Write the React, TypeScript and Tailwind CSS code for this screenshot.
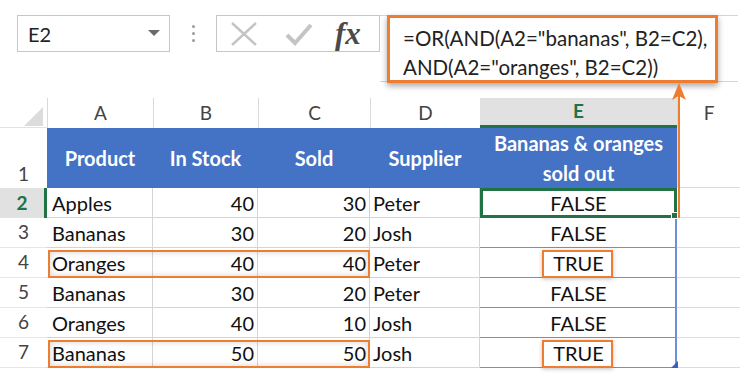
import React from "react";

const rows = [
    ["Apples", "40", "30", "Peter", "FALSE"],
    ["Bananas", "30", "20", "Josh", "FALSE"],
    ["Oranges", "40", "40", "Peter", "TRUE"],
    ["Bananas", "30", "20", "Peter", "FALSE"],
    ["Oranges", "40", "10", "Josh", "FALSE"],
    ["Bananas", "50", "50", "Josh", "TRUE"],
];

const letters = ["A", "B", "C", "D", "E", "F"];
const headers = ["Product", "In Stock", "Sold", "Supplier"];

function FormulaBar() {
    return (
        <div className="flex h-[67px] items-start">
            <div className="ml-[17px] flex h-[37px] w-[153px] items-center justify-between border border-[#c6c6c6] pl-[10px] pr-[9px] text-[20px] text-[#222]">
                <span>E2</span>
                <svg width="12" height="7" viewBox="0 0 12 7">
                    <path d="M0 0 L12 0 L6 6 Z" fill="#6b6b6b" />
                </svg>
            </div>
            <div className="flex h-[37px] w-[46px] flex-col items-center justify-center gap-[4px]">
                <span className="h-[3px] w-[3px] rounded-full bg-[#9a9a9a]" />
                <span className="h-[3px] w-[3px] rounded-full bg-[#9a9a9a]" />
                <span className="h-[3px] w-[3px] rounded-full bg-[#9a9a9a]" />
            </div>
            <div className="flex h-[37px] w-[164px] items-center border border-[#c6c6c6] pl-[13px]">
                <svg width="28" height="26" viewBox="0 0 28 26">
                    <path d="M2 2 L26 24 M26 2 L2 24" stroke="#c4c4c4" strokeWidth="2.4" fill="none" />
                </svg>
                <svg className="ml-[27px]" width="28" height="26" viewBox="0 0 28 26">
                    <path d="M2 14 L10 22 L26 4" stroke="#c4c4c4" strokeWidth="4" fill="none" />
                </svg>
                <span className="ml-[22px] font-['Liberation_Serif',serif] text-[31px] font-bold italic leading-none text-[#4a4a4a]">
                    fx
                </span>
            </div>
            <div className="h-[67px] w-[358px] border-y border-[#d4d4d4] pl-[7px] pr-[20px]">
                <div className="relative -top-px h-[68px] border-[3px] border-[#ED7D31] bg-white pl-[13px] pt-[6px] text-[20.5px] leading-[29px] text-[#222] shadow-[0_3px_6px_rgba(0,0,0,0.35)]">
                    <div>=OR(AND(A2="bananas", B2=C2),</div>
                    <div>AND(A2="oranges", B2=C2))</div>
                </div>
            </div>
        </div>
    );
}

function Sheet() {
    // blue table row line at the bottom, light grey gridline at the right
    const cell = "shadow-[inset_-1px_-1px_0_#d4d4d4,inset_0_-1px_0_#6f8fd6]";
    return (
        <div className="relative mt-[16px] grid w-[740px] grid-cols-[47px_106px_105px_112px_110px_197px_63px] grid-rows-[30px_60px_repeat(6,30px)] text-[20px] text-[#111]">
            {/* column headers */}
            <div className="relative border-b border-[#e2e2e2]">
                <svg className="absolute bottom-[1px] right-[4px]" width="19" height="19" viewBox="0 0 19 19">
                    <path d="M19 0 L19 19 L0 19 Z" fill="#dcdcdc" />
                </svg>
            </div>
            {letters.map((l) =>
                l === "E" ? (
                    <div
                        key={l}
                        className="flex items-center justify-center border-b-[3px] border-[#217346] bg-[#e1e1e1] text-[19px] font-bold text-[#217346]"
                    >
                        {l}
                    </div>
                ) : (
                    <div
                        key={l}
                        className="flex items-center justify-center border-l border-[#dadada] text-[19px] text-[#444]"
                    >
                        {l}
                    </div>
                )
            )}

            {/* header row 1 */}
            <div className="flex items-end justify-center text-[19px] text-[#444]">1</div>
            {headers.map((h) => (
                <div key={h} className="flex items-center justify-center bg-[#4472C4] font-bold text-white">
                    {h}
                </div>
            ))}
            <div className="flex flex-col items-center justify-center bg-[#4472C4] font-bold leading-[30px] text-white">
                <span>Bananas &amp; oranges</span>
                <span>sold out</span>
            </div>
            <div className="border-b border-l border-[#dcdcdc]" />

            {/* data rows */}
            {rows.map((r, i) => {
                const n = i + 2;
                const sel = n === 2;
                return (
                    <React.Fragment key={n}>
                        <div
                            className={
                                sel
                                    ? "flex items-center justify-center border-r-[3px] border-[#217346] bg-[#e1e1e1] text-[19px] font-bold text-[#217346]"
                                    : "flex items-center justify-center border-b border-[#e6e6e6] text-[19px] text-[#444]"
                            }
                        >
                            {n}
                        </div>
                        <div className={`flex items-center pl-[5px] ${cell}`}>{r[0]}</div>
                        <div className={`flex items-center justify-end pr-[4px] ${cell}`}>{r[1]}</div>
                        <div className={`flex items-center justify-end pr-[4px] ${cell}`}>{r[2]}</div>
                        <div className={`flex items-center pl-[3px] ${cell}`}>{r[3]}</div>
                        <div
                            className={
                                sel
                                    ? "relative flex items-center justify-center border-[3px] border-[#217346]"
                                    : "flex items-center justify-center shadow-[inset_-2px_-1px_0_#6f8fd6]"
                            }
                        >
                            {r[4]}
                            {sel && (
                                <span className="absolute -bottom-[4px] -right-[4px] h-[7px] w-[7px] border border-white bg-[#217346]" />
                            )}
                        </div>
                        <div className="border-b border-[#dcdcdc]" />
                    </React.Fragment>
                );
            })}

            {/* highlights */}
            <div className="pointer-events-none absolute left-[48px] top-[152px] h-[28px] w-[322px] border-2 border-[#ED7D31] shadow-[inset_0_0_6px_rgba(0,0,0,0.18)]" />
            <div className="pointer-events-none absolute left-[48px] top-[242px] h-[28px] w-[322px] border-2 border-[#ED7D31] shadow-[inset_0_0_6px_rgba(0,0,0,0.18)]" />
            <div className="pointer-events-none absolute left-[542px] top-[152px] h-[28px] w-[71px] border-2 border-[#ED7D31] shadow-[0_1px_4px_rgba(0,0,0,0.25)]" />
            <div className="pointer-events-none absolute left-[542px] top-[242px] h-[28px] w-[71px] border-2 border-[#ED7D31] shadow-[0_1px_4px_rgba(0,0,0,0.25)]" />

            {/* table resize handle */}
            <svg className="absolute left-[671px] top-[263px]" width="7" height="7" viewBox="0 0 7 7">
                <path d="M7 0 L7 7 L0 7 Z" fill="#3a5fc0" />
            </svg>
        </div>
    );
}

export default function App() {
    return (
        <div className="relative h-[377px] w-[750px] overflow-hidden bg-white pt-[15px] font-['Lato',sans-serif]">
            <FormulaBar />
            <Sheet />
            <svg className="absolute left-[671px] top-[82px]" width="16" height="138" viewBox="0 0 16 138">
                <path d="M8 1 L15 18 L8 14 L1 18 Z" fill="#ED7D31" />
                <path d="M8 14 L8 136" stroke="#ED7D31" strokeWidth="2" />
            </svg>
        </div>
    );
}
